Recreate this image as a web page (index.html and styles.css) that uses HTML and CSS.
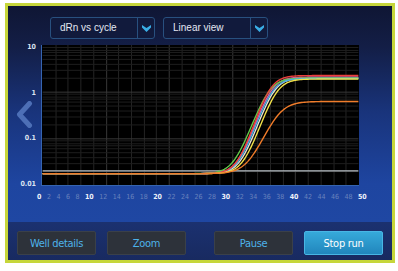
FILE: index.html
```html
<!DOCTYPE html>
<html lang="en">
<head>
  <meta charset="UTF-8" />
  <meta name="viewport" content="width=device-width, initial-scale=1" />
  <title>Amplification plot</title>
  <link rel="stylesheet" href="styles.css">
</head>
<body>
  <div class="frame">
    <!-- Selectores de vista -->
    <div class="toolbar">
      <div class="select">
        <span class="select-label">dRn vs cycle</span>
        <span class="select-arrow">
          <svg width="9" height="7" viewBox="0 0 9 7"><path d="M0 0 L4.5 3 L9 0 L9 2.6 L4.5 7 L0 2.6 Z" fill="#3aaee6"/></svg>
        </span>
      </div>
      <div class="select">
        <span class="select-label">Linear view</span>
        <span class="select-arrow">
          <svg width="9" height="7" viewBox="0 0 9 7"><path d="M0 0 L4.5 3 L9 0 L9 2.6 L4.5 7 L0 2.6 Z" fill="#3aaee6"/></svg>
        </span>
      </div>
    </div>

    <!-- Grafica -->
    <div class="chart">
      <div class="y-axis">
        <span>10</span>
        <span>1</span>
        <span>0.1</span>
        <span>0.01</span>
      </div>
      <svg id="plot" class="plot" width="318" height="141" viewBox="0 0 318 141"></svg>
    </div>
    <div class="x-axis">
      <span class="major">0</span><span>2</span><span>4</span><span>6</span><span>8</span>
      <span class="major">10</span><span>12</span><span>14</span><span>16</span><span>18</span>
      <span class="major">20</span><span>22</span><span>24</span><span>26</span><span>28</span>
      <span class="major">30</span><span>32</span><span>34</span><span>36</span><span>38</span>
      <span class="major">40</span><span>42</span><span>44</span><span>46</span><span>48</span>
      <span class="major">50</span>
    </div>

    <button class="nav-prev" type="button">
      <svg width="18" height="27" viewBox="0 0 18 27"><path d="M14.5 2.5 L4.5 13.5 L14.5 24.5" fill="none" stroke="#4d6fb6" stroke-width="5" stroke-linejoin="round" stroke-linecap="round"/></svg>
    </button>

    <!-- Acciones -->
    <div class="actions">
      <div class="group">
        <button class="btn" type="button">Well details</button>
        <button class="btn" type="button">Zoom</button>
      </div>
      <div class="group">
        <button class="btn" type="button">Pause</button>
        <button class="btn btn-primary" type="button">Stop run</button>
      </div>
    </div>
  </div>

  <script src="app.js"></script>
</body>
</html>
```

FILE: styles.css
```css
* {
  box-sizing: border-box;
  margin: 0;
  padding: 0;
}

body {
  background: #fff;
  font-family: "DejaVu Sans Condensed", "Liberation Sans", sans-serif;
}

.frame {
  position: relative;
  width: 390px;
  height: 260px;
  margin: 3px 0 0 5px;
  border: 3px solid #c6d63a;
  background: linear-gradient(180deg, #0f1634 0%, #131e46 16%, #19347c 42%, #1e45a0 70%, #2049a6 100%);
  display: flex;
  flex-direction: column;
}

.toolbar {
  display: flex;
  gap: 8px;
  padding: 11px 0 0 42px;
}

.select {
  display: flex;
  width: 105px;
  height: 22px;
  border: 1px solid #28507f;
  border-radius: 3px;
  background: #111a3c;
  color: #e3e8f2;
  font-family: "Liberation Sans", sans-serif;
  font-size: 10px;
}

.select-label {
  flex: 1;
  padding-left: 9px;
  line-height: 20px;
}

.select-arrow {
  width: 17px;
  border-left: 1px solid #28507f;
  display: flex;
  align-items: center;
  justify-content: center;
}

.chart {
  display: flex;
  margin-top: 6px;
}

.y-axis {
  width: 33px;
  height: 145px;
  margin-top: -2px;
  padding-right: 5px;
  display: flex;
  flex-direction: column;
  justify-content: space-between;
  align-items: flex-end;
  color: #dbe3f0;
  font-size: 7px;
  font-weight: bold;
  line-height: 8px;
}

.plot {
  display: block;
  background: #000;
  border-left: 1px solid #3564b0;
  border-bottom: 1px solid #3564b0;
}

.x-axis {
  display: flex;
  justify-content: space-between;
  width: 330px;
  margin: 4px 0 0 29px;
  font-size: 7px;
  line-height: 10px;
  color: #6983bd;
}

.x-axis .major {
  color: #eef2fa;
  font-weight: bold;
}

.nav-prev {
  position: absolute;
  left: 7px;
  top: 95px;
  background: none;
  border: none;
  line-height: 0;
}

.actions {
  margin-top: auto;
  height: 38px;
  padding: 9px 9px 0;
  display: flex;
  justify-content: space-between;
  background: linear-gradient(180deg, #1b3170 0%, #182a60 100%);
}

.group {
  display: flex;
  gap: 11px;
}

.btn {
  width: 79px;
  height: 24px;
  background: #2d323a;
  border: 1px solid #3a4049;
  border-radius: 2px;
  color: #4db3ea;
  font-family: inherit;
  font-size: 11px;
  letter-spacing: -0.3px;
}

.btn-primary {
  background: linear-gradient(180deg, #36a9da 0%, #2186bc 100%);
  border-color: #48b6e4;
  color: #fff;
}
```

FILE: app.js
```js
var svg = document.getElementById('plot');
var NS = 'http://www.w3.org/2000/svg';
var W = 318, H = 141;
var PER_CYCLE = W / 50;
var PER_DECADE = H / 3;

function xOf(c) { return c * PER_CYCLE; }
function yOf(v) { return (1 - Math.log10(v)) * PER_DECADE; }

function add(tag, attrs) {
  var el = document.createElementNS(NS, tag);
  for (var k in attrs) el.setAttribute(k, attrs[k]);
  svg.appendChild(el);
  return el;
}

// grid vertical cada 2 ciclos
for (var c = 2; c < 50; c += 2) {
  var x = Math.round(xOf(c)) + 0.5;
  add('line', { x1: x, y1: 0, x2: x, y2: H, stroke: c % 10 === 0 ? '#383838' : '#242424', 'stroke-width': 1 });
}

// grid horizontal logaritmico
[0.01, 0.1, 1].forEach(function (base) {
  for (var m = 1; m <= 9; m++) {
    var y = Math.round(yOf(base * m)) + 0.5;
    add('line', { x1: 0, y1: y, x2: W, y2: y, stroke: m === 1 ? '#383838' : '#1e1e1e', 'stroke-width': 1 });
  }
});

// umbral
add('line', { x1: 0, y1: yOf(0.02), x2: W, y2: yOf(0.02), stroke: '#b9c0c6', 'stroke-width': 1.2 });

var BASE = 0.0175;
var curves = [
  { color: '#e8e2d2', plateau: 1.95, mid: 36.6, k: 1.1 },
  { color: '#e0509a', plateau: 2.05, mid: 36.2, k: 1.1 },
  { color: '#62c84a', plateau: 1.95, mid: 35.8, k: 1.15 },
  { color: '#4aaee2', plateau: 1.9, mid: 36.3, k: 1.1 },
  { color: '#e8413a', plateau: 2.2, mid: 36.0, k: 1.05 },
  { color: '#f2e24a', plateau: 1.85, mid: 37.0, k: 1.1 },
  { color: '#f07c2a', plateau: 0.6, mid: 37.3, k: 1.3 }
];

curves.forEach(function (cv) {
  var d = '';
  for (var c = 0; c <= 50; c += 0.25) {
    var v = BASE + cv.plateau / (1 + Math.exp(-(c - cv.mid) / cv.k));
    d += (c === 0 ? 'M' : 'L') + xOf(c).toFixed(2) + ' ' + yOf(v).toFixed(2) + ' ';
  }
  add('path', { d: d, fill: 'none', stroke: cv.color, 'stroke-width': 1.4 });
});
```
